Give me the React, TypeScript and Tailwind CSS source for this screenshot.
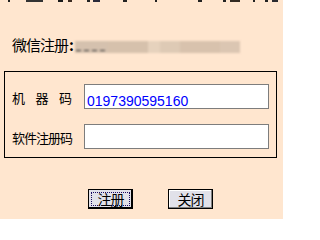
import React from "react";

const cjk = { fontFamily: '"Noto Sans CJK SC", "Noto Sans", sans-serif' };

const marks: [number, number, string][] = [
  [8, 10, "#222"],
  [26, 43, "#333"],
  [58, 63, "#1a1a1a"],
  [68, 72, "#3a2a20"],
  [87, 90, "#222"],
  [93, 100, "#2a2a3a"],
  [123, 127, "#222"],
  [155, 157, "#222"],
  [198, 202, "#222"],
  [223, 226, "#222"],
  [230, 240, "#332a22"],
  [253, 255, "#222"],
  [265, 268, "#222"],
  [272, 278, "#2a2a30"],
];

export default function App() {
  let cursor = 0;
  return (
    <div className="w-[283px] h-[219px] bg-[#ffe6cf] overflow-hidden flex flex-col" style={cjk}>
      {/* fragments of a clipped line at the very top */}
      <div className="h-[2px] flex shrink-0">
        {marks.map(([a, b, c], i) => {
          const ml = a - cursor;
          cursor = b;
          return (
            <span
              key={i}
              className="h-[2px]"
              style={{ marginLeft: ml, width: b - a, background: c }}
            />
          );
        })}
      </div>

      {/* WeChat line */}
      <div className="mt-[35px] h-[16px] pl-[12px] flex items-center text-[15px] leading-[16px] text-black whitespace-nowrap">
        <span className="tracking-[-1px]">微信注册</span>
        <span className="w-[7px] font-bold text-center">:</span>
        <div className="flex h-[12px] mt-[3px] blur-[1px]">
          <div className="w-[33px] bg-[#d5c1ae] flex items-end pb-[2px] gap-[3px] pl-[1px]">
            <span className="w-[5px] h-[1px] bg-[#333]" />
            <span className="w-[5px] h-[1px] bg-[#333]" />
            <span className="w-[5px] h-[1px] bg-[#333]" />
            <span className="w-[5px] h-[1px] bg-[#333]" />
          </div>
          <div className="w-[40px] bg-[#d6c1ac]" />
          <div className="w-[12px] bg-[#e6d2bd]" />
          <div className="w-[20px] bg-[#decab5]" />
          <div className="w-[40px] bg-[#d8c2ad]" />
          <div className="w-[20px] bg-[#dbc6b2]" />
        </div>
      </div>

      {/* group box */}
      <div className="mt-[18px] ml-[4px] w-[273px] h-[87px] border border-black pt-[12px] pl-[7px] pr-[7px] flex flex-col gap-[15px]">
        <div className="flex items-center h-[25px]">
          <div className="w-[60px] mr-[12px] mt-[2px] flex justify-between text-[13px] leading-[14px] text-black">
            <span>机</span>
            <span>器</span>
            <span>码</span>
          </div>
          <div className="w-[185px] h-[25px] bg-white border border-[#7d7d7d] pl-[2px] pt-[2px]">
            <span
              className="text-[14px] leading-[16px] text-[#0000ff]"
              style={{ fontFamily: '"Liberation Sans", Arial, sans-serif' }}
            >
              0197390595160
            </span>
          </div>
        </div>
        <div className="flex items-center h-[25px]">
          <div className="w-[60px] mr-[12px] mt-[2px] text-[13px] leading-[14px] tracking-[-1px] text-black whitespace-nowrap">
            软件注册码
          </div>
          <div className="w-[185px] h-[25px] bg-white border border-[#7d7d7d]" />
        </div>
      </div>

      {/* buttons */}
      <div className="mt-[31px] flex pl-[88px] gap-[35px]">
        <div className="w-[45px] h-[20px] bg-[#e1e1e9] border border-black shadow-[inset_-1px_-1px_0_#000] p-[2px]">
          <div className="w-full h-full border border-dotted border-[#1a0a60] flex items-center justify-center text-[14px] leading-[14px] tracking-[-1px] text-black">
            注册
          </div>
        </div>
        <div className="w-[45px] h-[20px] bg-[#e1e1e9] border border-black shadow-[inset_-1px_-1px_0_#808080,inset_1px_1px_0_#fff] flex items-center justify-center text-[14px] leading-[14px] tracking-[-1px] text-black">
          关闭
        </div>
      </div>
    </div>
  );
}
